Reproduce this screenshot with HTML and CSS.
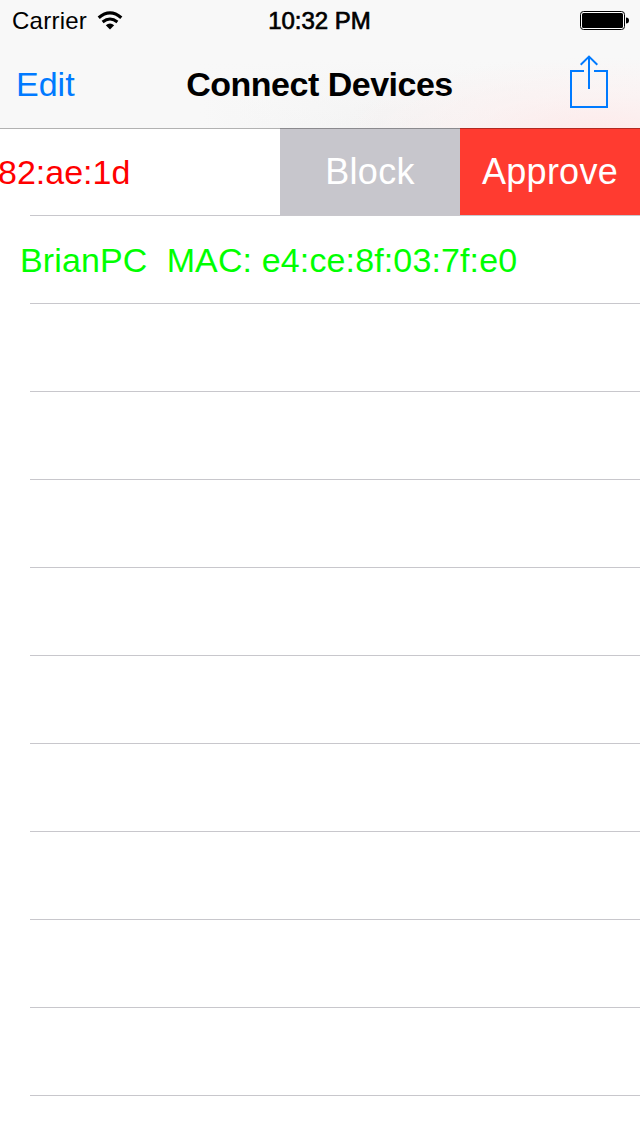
FILE: index.html
```html
<!DOCTYPE html>
<html lang="en">
<head>
<meta charset="utf-8">
<title>Connect Devices</title>
<link rel="stylesheet" href="styles.css">
</head>
<body>
<header class="header">
  <div class="status">
    <div class="carrier"><span class="carrier-name">Carrier</span>
      <svg class="wifi" width="26" height="20" viewBox="0 0 26 20" fill="none" stroke="#000">
        <path d="M1.7 6.8Q13 -3 24.3 6.8" stroke-width="3.2"/>
        <path d="M5.6 11Q13 5 20.4 11" stroke-width="3"/>
        <path d="M8.8 14.3Q13 10.6 17.2 14.3L13 18.6Z" fill="#000" stroke="none"/>
      </svg>
    </div>
    <span class="time">10:32 PM</span>
    <svg class="battery" width="50" height="20" viewBox="0 0 50 20">
      <rect x=".5" y=".5" width="44" height="18" rx="3" fill="#fff" stroke="#000"/>
      <rect x="2" y="2" width="41" height="15" rx="1.5"/>
      <path d="M46 6.5Q49 6.5 49 9.5T46 12.5Z"/>
    </svg>
  </div>
  <nav class="bar">
    <a class="edit">Edit</a>
    <h1 class="title">Connect Devices</h1>
    <svg class="share" width="40" height="56" viewBox="0 0 40 56" fill="none" stroke="#007aff" stroke-width="2">
      <path d="M15 17H2V53H38V17H25"/>
      <path d="M20 35V3M11.7 10.7L20 2.6L28.3 10.7"/>
    </svg>
  </nav>
</header>
<main class="list">
  <div class="row swiped">
    <span class="device pending">82:ae:1d</span>
    <div class="actions"><button class="action block"><span class="block-label">Block</span></button><button class="action approve"><span class="approve-label">Approve</span></button></div>
  </div>
  <div class="row"><span class="device approved">BrianPC&nbsp; MAC: e4:ce:8f:03:7f:e0</span></div>
  <div class="row"></div>
  <div class="row"></div>
  <div class="row"></div>
  <div class="row"></div>
  <div class="row"></div>
  <div class="row"></div>
  <div class="row"></div>
  <div class="row"></div>
  <div class="row"></div>
</main>
</body>
</html>
```

FILE: styles.css
```css
* { box-sizing: border-box; }
body {
  margin: 0;
  height: 1136px;
  overflow: hidden;
  background: #fff;
  font-family: "Liberation Sans", Arial, sans-serif;
  font-size: 34px;
}
.header {
  position: relative;
  z-index: 1;
  height: 129px;
  border-bottom: 1px solid rgba(0, 0, 0, .3);
  background:
    radial-gradient(ellipse 260px 75px at 600px 132px, rgba(255, 231, 231, .8), rgba(255, 237, 237, .45) 50%, rgba(248, 248, 248, 0)),
    linear-gradient(rgba(248, 248, 248, 1) 60px, rgba(248, 248, 248, 0)),
    linear-gradient(90deg, rgba(242, 242, 242, 0) 200px, rgba(242, 242, 242, .8) 380px, rgba(242, 242, 242, 0)),
    #f8f8f8;
  background-clip: padding-box;
}
.status {
  display: grid;
  grid-template-columns: 1fr auto 1fr;
  align-items: center;
  height: 40px;
  padding: 2px 11px 0 12px;
  font-size: 24px;
}
.carrier { display: flex; align-items: center; gap: 10px; }
.carrier-name { letter-spacing: .25px; }
.time { margin-right: 2px; -webkit-text-stroke: .7px #000; }
.battery { justify-self: end; margin-right: -1px; }
.bar {
  display: grid;
  grid-template-columns: 1fr auto 1fr;
  align-items: center;
  height: 88px;
  padding: 0 31px 0 16px;
}
.edit { color: #007aff; }
.title {
  margin: 0;
  padding-left: 14px;
  font-size: 34px;
  font-weight: 700;
  letter-spacing: -.5px;
}
.share { justify-self: end; margin-bottom: 4px; }
.list { margin-top: -1px; }
.row {
  display: flex;
  align-items: center;
  height: 88px;
  padding-left: 20px;
  background: linear-gradient(#c8c7cc, #c8c7cc) 30px 87px / 610px 1px no-repeat;
}
.device { white-space: nowrap; }
.swiped { padding-left: 0; justify-content: space-between; }
.pending { color: #f00; margin-left: -2px; }
.approved { color: #0f0; letter-spacing: .13px; }
.actions { display: flex; height: 87px; align-self: flex-start; }
.action {
  width: 180px;
  border: 0;
  padding: 0;
  color: #fff;
  font: 36px "Liberation Sans", Arial, sans-serif;
  letter-spacing: .25px;
}
.block { background: #c7c6cc; }
.approve { background: #ff3b30; }
```
